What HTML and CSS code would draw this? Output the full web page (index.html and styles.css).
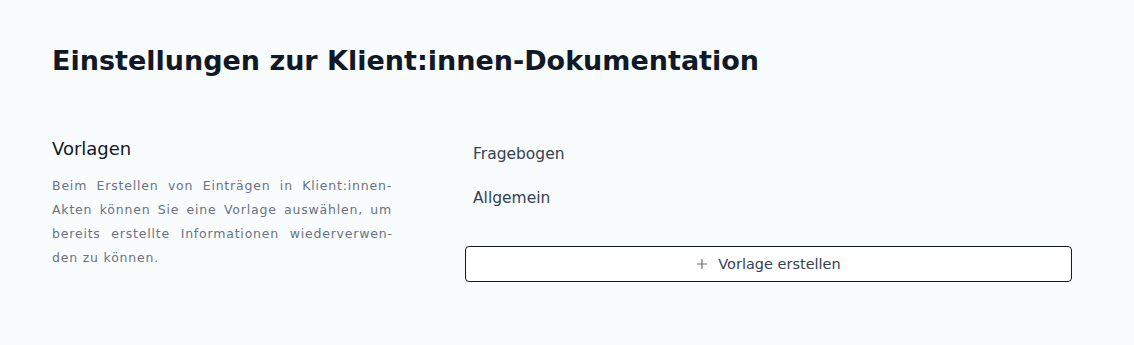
FILE: index.html
```html
<!DOCTYPE html>
<html lang="de">

<head>
  <meta charset="UTF-8">
  <title>Einstellungen zur Klient:innen-Dokumentation</title>
  <meta name="viewport" content="width=device-width, initial-scale=1">
  <link rel="stylesheet" href="styles.css">
</head>

<body>
  <main class="page">
    <h1 class="page-title">Einstellungen zur Klient:innen-Dokumentation</h1>

    <section class="settings-row">
      <div class="settings-info">
        <h2>Vorlagen</h2>
        <p>Beim Erstellen von Einträgen in Klient:innen-Akten können Sie eine Vorlage auswählen, um bereits erstellte Informationen wiederverwen&shy;den zu können.</p>
      </div>
      <div class="settings-body">
        <ul class="template-list">
          <li>Fragebogen</li>
          <li>Allgemein</li>
        </ul>
        <button class="add-btn">
          <svg width="12" height="12" viewBox="0 0 12 12" aria-hidden="true">
            <path d="M6 1v10M1 6h10" stroke="#6b7280" stroke-width="1.2" fill="none" />
          </svg>
          Vorlage erstellen
        </button>
      </div>
    </section>
  </main>
</body>

</html>
```

FILE: styles.css
```css
body {
  margin: 0;
  padding: 0;
  background: #f8fcfd;
  font-family: "DejaVu Sans", sans-serif;
  color: #111827;
}

.page {
  padding: 42px 62px 40px 52px;
}

.page-title {
  margin: 0;
  font-size: 27px;
  font-weight: bold;
  line-height: 38px;
  color: #111827;
}

.settings-row {
  display: grid;
  grid-template-columns: 340px 1fr;
  column-gap: 73px;
  margin-top: 56px;
}

.settings-info h2 {
  margin: 0;
  font-size: 18px;
  font-weight: normal;
  line-height: 26px;
  color: #111827;
}

.settings-info p {
  margin: 12px 0 0 0;
  font-size: 12.5px;
  line-height: 24px;
  color: #6b7280;
  text-align: justify;
  hyphens: manual;
  letter-spacing: 0.8px;
}

.template-list {
  list-style: none;
  margin: 0;
  padding: 0;
}

.template-list li {
  padding: 6px 8px 14px;
  font-size: 15.5px;
  line-height: 24px;
  color: #374151;
}

.add-btn {
  width: 100%;
  margin-top: 22px;
  height: 36px;
  background: #fff;
  border: 1px solid #111827;
  border-radius: 4px;
  font-family: inherit;
  font-size: 14.5px;
  color: #374151;
  display: flex;
  align-items: center;
  justify-content: center;
  gap: 10px;
  cursor: pointer;
}
```
